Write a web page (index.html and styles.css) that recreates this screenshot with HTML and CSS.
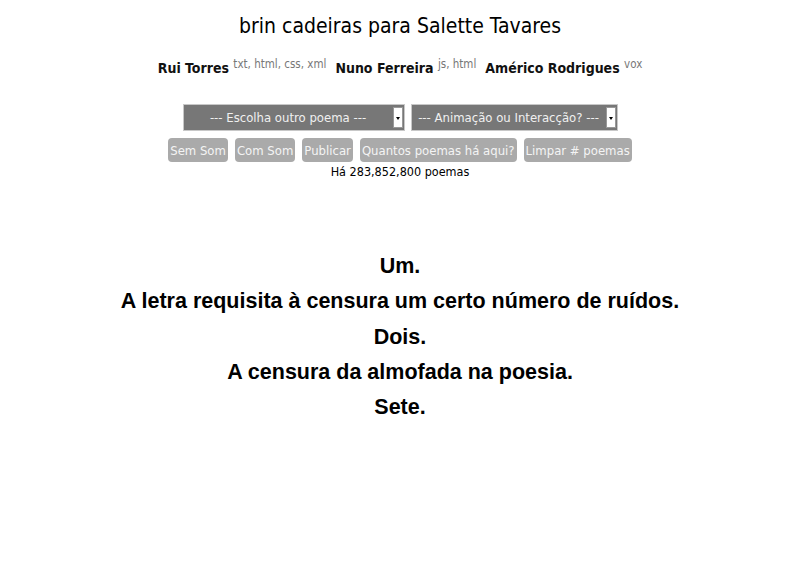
FILE: index.html
```html
<!DOCTYPE html>
<html lang="pt">
<head>
<meta charset="utf-8">
<title>brin cadeiras para Salette Tavares</title>
<link rel="stylesheet" href="styles.css">
</head>
<body>
<header class="top">
  <h1 class="title">brin cadeiras para Salette Tavares</h1>
  <p class="authors">
    <span class="author">Rui Torres <sup>txt, html, css, xml</sup></span>
    <span class="author">Nuno Ferreira <sup>js, html</sup></span>
    <span class="author">Américo Rodrigues <sup>vox</sup></span>
  </p>
</header>
<form class="controls">
  <div class="selects">
    <div class="select sel1"><span class="label">--- Escolha outro poema ---</span><span class="arrow"></span></div>
    <div class="select sel2"><span class="label">--- Animação ou Interacção? ---</span><span class="arrow"></span></div>
  </div>
  <div class="buttons">
    <button type="button" class="btn">Sem Som</button>
    <button type="button" class="btn">Com Som</button>
    <button type="button" class="btn">Publicar</button>
    <button type="button" class="btn">Quantos poemas há aqui?</button>
    <button type="button" class="btn">Limpar # poemas</button>
  </div>
  <p class="count">Há 283,852,800 poemas</p>
</form>
<main class="poem">
  <p>Um.</p>
  <p>A letra requisita à censura um certo número de ruídos.</p>
  <p>Dois.</p>
  <p>A censura da almofada na poesia.</p>
  <p>Sete.</p>
</main>
</body>
</html>
```

FILE: styles.css
```css
body {
  margin: 0;
  background: #fff;
  color: #111;
  font-family: "DejaVu Sans Condensed", "Noto Sans", sans-serif;
  text-align: center;
}
.top {
  padding-top: 12px;
}
.title {
  margin: 0;
  font-size: 21px;
  font-weight: normal;
  line-height: 28px;
  color: #000;
}
.authors {
  margin: 18px 0 0;
  font-size: 14px;
  font-weight: bold;
  line-height: 20px;
  display: flex;
  justify-content: center;
  gap: 9px;
  color: #111;
}
.authors sup {
  font-size: 11.5px;
  font-weight: normal;
  color: #777;
  vertical-align: 5px;
  line-height: 0;
}
.controls {
  margin-top: 26px;
  display: flex;
  flex-direction: column;
  align-items: center;
}
.selects {
  display: flex;
  gap: 6px;
}
.select {
  display: flex;
  align-items: stretch;
  height: 27px;
  box-sizing: border-box;
  border: 1px solid #c8c8c8;
  background: #777;
  color: #f0f0f0;
  font-size: 13px;
}
.sel1 { width: 222px; }
.sel2 { width: 207px; }
.select .label {
  flex: 1;
  display: flex;
  align-items: center;
  justify-content: center;
}
.select .arrow {
  width: 8px;
  margin: 2px 1px 2px 0;
  background: #fff;
  border: 1px solid #999;
  position: relative;
}
.select .arrow::after {
  content: "";
  position: absolute;
  left: 2px;
  top: 9px;
  border-left: 2px solid transparent;
  border-right: 2px solid transparent;
  border-top: 3px solid #000;
}
.buttons {
  display: flex;
  gap: 7px;
  margin-top: 7px;
}
.btn {
  font-family: inherit;
  font-size: 13px;
  height: 24px;
  padding: 0 2px;
  background: #aaa;
  color: #f4f4f4;
  border: 0;
  border-radius: 4px;
}
.count {
  margin: 1px 0 0;
  font-size: 12.5px;
  line-height: 17px;
  color: #000;
}
.poem {
  margin-top: 69px;
  font-family: "Liberation Sans", Arial, sans-serif;
  font-weight: bold;
  font-size: 21.5px;
  color: #000;
}
.poem p {
  margin: 0;
  line-height: 35.25px;
}
```
